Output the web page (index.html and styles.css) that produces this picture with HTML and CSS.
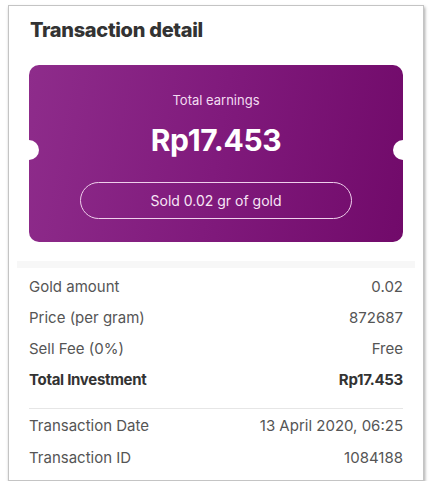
FILE: index.html
```html
<!DOCTYPE html>
<html>
<head>
<meta charset="utf-8">
<link rel="stylesheet" href="styles.css">
</head>
<body>
<div class="card">
  <h1 class="title">Transaction detail</h1>
  <div class="ticket">
    <div class="ticket-label">Total earnings</div>
    <div class="ticket-amount">Rp17.453</div>
    <div class="ticket-pill">Sold 0.02 gr of gold</div>
  </div>
  <div class="band"></div>
  <div class="rows">
    <div class="row"><span>Gold amount</span><span>0.02</span></div>
    <div class="row"><span>Price (per gram)</span><span>872687</span></div>
    <div class="row"><span>Sell Fee (0%)</span><span>Free</span></div>
    <div class="row total"><span>Total Investment</span><span>Rp17.453</span></div>
  </div>
  <div class="divider"></div>
  <div class="rows meta">
    <div class="row"><span>Transaction Date</span><span>13 April 2020, 06:25</span></div>
    <div class="row"><span>Transaction ID</span><span>1084188</span></div>
  </div>
</div>
</body>
</html>
```
FILE: styles.css
```css
html, body {
  margin: 0;
  padding: 0;
  background: #ffffff;
}
body {
  font-family: Inter, "Noto Sans", sans-serif;
  padding: 5px 7px 0 8px;
}
.card {
  box-sizing: border-box;
  width: 416px;
  height: 476px;
  border: 1px solid #c4c4c4;
  box-shadow: 1px 2px 3px rgba(0,0,0,0.35);
  background: #fff;
  padding: 12px 20px 0 20px;
}
.title {
  margin: 0;
  font-size: 20px;
  line-height: 24px;
  font-weight: 800;
  color: #333;
  letter-spacing: -0.3px;
  padding-left: 1px;
}
.ticket {
  position: relative;
  margin-top: 23px;
  height: 177px;
  box-sizing: border-box;
  border-radius: 10px;
  background: linear-gradient(100deg, #8e2c8b 0%, #801a7c 50%, #710a6a 100%);
  display: flex;
  flex-direction: column;
  align-items: center;
  padding-top: 27px;
  color: #fff;
}
.ticket::before,
.ticket::after {
  content: "";
  position: absolute;
  top: 75px;
  width: 20px;
  height: 20px;
  border-radius: 50%;
  background: #fff;
}
.ticket::before { left: -10px; }
.ticket::after { right: -10px; }
.ticket-label {
  font-size: 13px;
  line-height: 16px;
  color: #f3dcf1;
}
.ticket-amount {
  margin-top: 13px;
  font-size: 30px;
  line-height: 38px;
  font-weight: 700;
  letter-spacing: -0.3px;
}
.ticket-pill {
  margin-top: 23px;
  box-sizing: border-box;
  width: 272px;
  height: 37px;
  border: 1px solid #efcfec;
  border-radius: 19px;
  display: flex;
  align-items: center;
  justify-content: center;
  font-size: 14px;
  color: #f7e6f5;
}
.band {
  margin: 19px -12px 0;
  height: 7px;
  background: #f7f7f7;
}
.rows {
  margin-top: 3px;
}
.row {
  display: flex;
  justify-content: space-between;
  font-size: 15px;
  line-height: 31px;
  color: #555;
}
.row.total {
  font-weight: 700;
  color: #333;
  letter-spacing: -0.3px;
}
.divider {
  margin-top: 13px;
  height: 1px;
  background: #e6e6e6;
}
.meta {
  margin-top: 1px;
}
.meta .row {
  line-height: 32px;
}
```
